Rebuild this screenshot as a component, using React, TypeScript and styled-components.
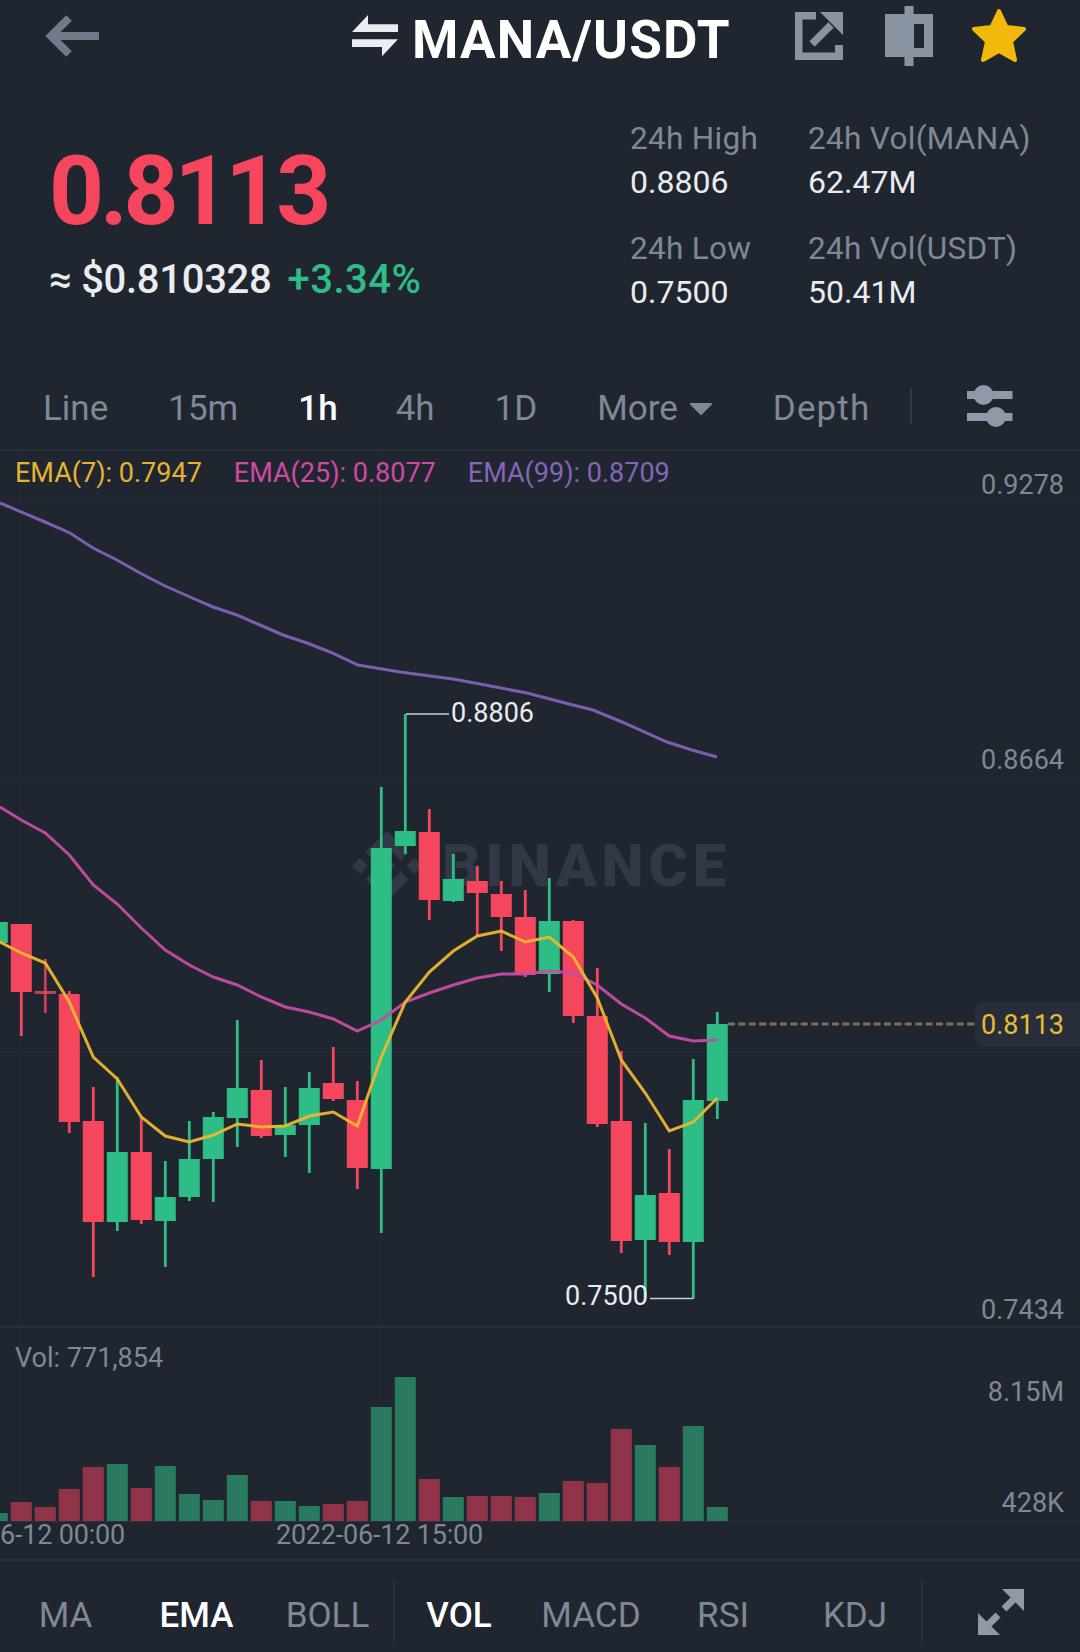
import React from 'react';
import styled, { createGlobalStyle } from 'styled-components';

const GlobalStyle = createGlobalStyle`
  html, body {
    margin: 0;
    padding: 0;
    background: #1f2630;
  }
  * { box-sizing: border-box; }
`;

const GREY = '#7f8896';
const WHITE = '#eaecef';
const GREEN = '#2ebd85';
const RED = '#f6465d';

const Page = styled.div`
  width: 1080px;
  height: 1652px;
  overflow: hidden;
  background: #1f2630;
  color: ${WHITE};
  font-family: Roboto, "Liberation Sans", sans-serif;
`;

const Header = styled.header`
  height: 72px;
  display: flex;
  align-items: center;
  padding: 0 54px 0 45px;
`;

const TitleGroup = styled.div`
  display: flex;
  align-items: center;
  gap: 13px;
  margin-left: 252px;
`;

const Title = styled.h1`
  margin: 8px 0 0;
  font-size: 53px;
  line-height: 60px;
  font-weight: 700;
  color: #fff;
  letter-spacing: 1.1px;
`;

const Actions = styled.div`
  margin-left: auto;
  display: flex;
  align-items: center;
  gap: 39px;
`;

const ShareSlot = styled.span`
  display: flex;
  margin-right: 3px;
`;

const Summary = styled.section`
  height: 298px;
  display: flex;
  justify-content: space-between;
`;

const PriceBlock = styled.div`
  padding: 71px 0 0 49px;
`;

const LastPrice = styled.div`
  font-size: 96px;
  line-height: 96px;
  font-weight: 700;
  color: ${RED};
  letter-spacing: -4.2px;
`;

const PriceSub = styled.div`
  margin-top: 17px;
  display: flex;
  gap: 16px;
  font-size: 40px;
  line-height: 48px;
  font-weight: 500;
  letter-spacing: -0.3px;
`;

const Change = styled.span`
  color: ${GREEN};
  letter-spacing: 0.5px;
`;

const Stats = styled.div`
  width: 450px;
  padding-top: 48px;
  display: grid;
  grid-template-columns: 178px 1fr;
  grid-auto-rows: 110px;
`;

const Stat = styled.div`
  display: flex;
  flex-direction: column;
  gap: 5px;
`;

const StatLabel = styled.span`
  font-size: 31.5px;
  line-height: 38px;
  letter-spacing: 0.3px;
  color: ${GREY};
`;

const StatValue = styled.span`
  font-size: 32px;
  line-height: 38px;
  color: ${WHITE};
`;

const Intervals = styled.nav`
  height: 81px;
  display: flex;
  align-items: center;
  gap: 60px;
  padding: 0 0 7px 43px;
  border-bottom: 2px solid #2a303b;
`;

const Interval = styled.span<{ $active?: boolean; $spaced?: boolean }>`
  display: flex;
  align-items: center;
  gap: 11px;
  padding-top: 6px;
  font-size: 35px;
  line-height: 40px;
  font-weight: ${p => (p.$active ? 500 : 400)};
  letter-spacing: ${p => (p.$spaced ? '1.1px' : '0')};
  color: ${p => (p.$active ? '#fff' : GREY)};
  margin-right: ${p => (p.$active ? '-2px' : '0')};
`;

const RowDivider = styled.span`
  width: 2px;
  height: 36px;
  margin-left: -20px;
  background: #323946;
`;

const SettingsIcon = styled.svg`
  margin-left: -5px;
`;

const ChartPanel = styled.section`
  position: relative;
  height: 877px;
  border-bottom: 2px solid #2a303b;
`;

const ChartSvg = styled.svg`
  position: relative;
  display: block;
  z-index: 1;
`;

const Watermark = styled.div`
  position: absolute;
  left: 352px;
  top: 379px;
  display: flex;
  align-items: center;
  gap: 20px;
  color: #323845;
`;

const WatermarkText = styled.span`
  font-size: 60px;
  line-height: 72px;
  font-weight: 900;
  letter-spacing: 4.8px;
`;

const Legend = styled.div`
  position: absolute;
  z-index: 2;
  left: 15px;
  top: 5px;
  display: flex;
  gap: 32px;
  font-size: 27px;
  line-height: 34px;
`;

const LegendItem = styled.span<{ $color: string }>`
  color: ${p => p.$color};
`;

const AxisLabel = styled.span<{ $y: number }>`
  position: absolute;
  z-index: 2;
  right: 16px;
  top: ${p => p.$y}px;
  font-size: 27px;
  line-height: 34px;
  color: ${GREY};
`;

const LastTag = styled.span`
  position: absolute;
  z-index: 2;
  right: 0;
  top: 551px;
  width: 105px;
  height: 45px;
  padding-left: 6px;
  border-radius: 8px 0 0 8px;
  background: #282e39;
  color: #e6bd32;
  font-size: 27px;
  line-height: 47px;
`;

const ExtremeLabel = styled.span<{ $x: number; $y: number }>`
  position: absolute;
  z-index: 2;
  left: ${p => p.$x}px;
  top: ${p => p.$y}px;
  font-size: 27px;
  line-height: 34px;
  color: ${WHITE};
`;

const VolumePanel = styled.section`
  position: relative;
  height: 233px;
  border-bottom: 2px solid #2a303b;
`;

const VolumeCaption = styled.span`
  position: absolute;
  z-index: 2;
  left: 15px;
  top: 13px;
  font-size: 27px;
  line-height: 34px;
  color: ${GREY};
`;

const VolumeSvg = styled.svg`
  display: block;
`;

const TimeAxis = styled.div`
  display: flex;
  gap: 151px;
  margin-top: -6px;
  font-size: 27px;
  line-height: 34px;
  letter-spacing: -0.2px;
  color: ${GREY};
`;

const Indicators = styled.nav`
  height: 91px;
  display: grid;
  grid-template-columns: repeat(3, 131px) repeat(4, 132px) 1fr;
  align-items: center;
`;

const Indicator = styled.span<{ $active?: boolean; $divider?: boolean; $nudge?: number }>`
  position: relative;
  display: flex;
  justify-content: center;
  align-items: center;
  height: 91px;
  padding-top: ${p => p.$nudge ?? 17}px;
  font-size: 35px;
  font-weight: ${p => (p.$active ? 500 : 400)};
  color: ${p => (p.$active ? '#fff' : GREY)};

  ${p =>
    p.$divider &&
    `&::before {
      content: '';
      position: absolute;
      left: 0;
      top: 19px;
      bottom: 9px;
      width: 2px;
      background: #2a303b;
    }`}
`;

type Candle = { up: boolean; top: number; bot: number; hi: number; lo: number; vol: number };

// x = first centre + index * 24
const candles: Candle[] = [
  { up: true, top: 922, bot: 943, hi: 922, lo: 943, vol: 1513 },
  { up: false, top: 924, bot: 992, hi: 924, lo: 1036, vol: 1502 },
  { up: false, top: 991, bot: 994, hi: 959, lo: 1013, vol: 1507 },
  { up: false, top: 994, bot: 1122, hi: 991, lo: 1133, vol: 1489 },
  { up: false, top: 1121, bot: 1222, hi: 1087, lo: 1277, vol: 1467 },
  { up: true, top: 1152, bot: 1222, hi: 1077, lo: 1231, vol: 1464 },
  { up: false, top: 1152, bot: 1220, hi: 1117, lo: 1224, vol: 1488 },
  { up: true, top: 1197, bot: 1221, hi: 1161, lo: 1267, vol: 1466 },
  { up: true, top: 1159, bot: 1197, hi: 1121, lo: 1201, vol: 1494 },
  { up: true, top: 1117, bot: 1159, hi: 1112, lo: 1202, vol: 1500 },
  { up: true, top: 1088, bot: 1118, hi: 1020, lo: 1147, vol: 1475 },
  { up: false, top: 1090, bot: 1136, hi: 1060, lo: 1138, vol: 1501 },
  { up: true, top: 1125, bot: 1135, hi: 1087, lo: 1157, vol: 1501 },
  { up: true, top: 1088, bot: 1125, hi: 1072, lo: 1173, vol: 1506 },
  { up: false, top: 1083, bot: 1099, hi: 1047, lo: 1101, vol: 1504 },
  { up: false, top: 1100, bot: 1168, hi: 1081, lo: 1189, vol: 1501 },
  { up: true, top: 848, bot: 1169, hi: 787, lo: 1233, vol: 1407 },
  { up: true, top: 831, bot: 846, hi: 714, lo: 854, vol: 1377 },
  { up: false, top: 832, bot: 900, hi: 809, lo: 920, vol: 1479 },
  { up: true, top: 879, bot: 901, hi: 854, lo: 902, vol: 1497 },
  { up: false, top: 881, bot: 893, hi: 866, lo: 936, vol: 1496 },
  { up: false, top: 894, bot: 917, hi: 881, lo: 951, vol: 1496 },
  { up: false, top: 917, bot: 975, hi: 890, lo: 977, vol: 1497 },
  { up: true, top: 921, bot: 974, hi: 878, lo: 992, vol: 1493 },
  { up: false, top: 921, bot: 1016, hi: 920, lo: 1023, vol: 1481 },
  { up: false, top: 1016, bot: 1124, hi: 968, lo: 1127, vol: 1483 },
  { up: false, top: 1121, bot: 1241, hi: 1051, lo: 1253, vol: 1429 },
  { up: true, top: 1195, bot: 1240, hi: 1123, lo: 1298, vol: 1445 },
  { up: false, top: 1193, bot: 1242, hi: 1149, lo: 1255, vol: 1467 },
  { up: true, top: 1100, bot: 1242, hi: 1059, lo: 1299, vol: 1426 },
  { up: true, top: 1024, bot: 1101, hi: 1012, lo: 1119, vol: 1507 },
];

const candleX = (i: number) => -2.7 + i * 24;

const ema7 =
  '0,942 21.3,953 45.3,963 69.3,1002 93.3,1057 117.3,1079 141.3,1117 165.3,1136 189.3,1142 213.3,1135 237.3,1124 261.3,1127 285.3,1126 309.3,1116 333.3,1112 357.3,1126 381.3,1057 405.3,1002 429.3,972 453.3,951 477.3,936 501.3,931 525.3,942 549.3,937 573.3,957 597.3,998 621.3,1060 645.3,1093 669.3,1131 693.3,1122 717.3,1098';
const ema25 =
  '0,807 21.3,820 45.3,833 69.3,855 93.3,885 117.3,904 141.3,928 165.3,950 189.3,965 213.3,977 237.3,985 261.3,997 285.3,1007 309.3,1012 333.3,1019 357.3,1031 381.3,1020 405.3,1002 429.3,993 453.3,985 477.3,978 501.3,974 525.3,974 549.3,971 573.3,973 597.3,985 621.3,1004 645.3,1018 669.3,1036 693.3,1041 717.3,1040';
const ema99 =
  '0,503 45,522 70,533 93,548 117,560 140,573 163,585 190,597 213,607 237,615 260,625 283,635 307,643 330,652 358,665 400,672 453,679 480,684 527,693 569,704 593,710 622,722 667,742 692,750 717,757';

const gridV = [21, 381];
const gridH = [502, 777, 1052];

function BackIcon() {
  return (
    <svg width="55" height="44" viewBox="45 14 55 44" fill="none">
      <path d="M99 36H52M69 18L51 36l18 18" stroke="#707a8a" strokeWidth="8" />
    </svg>
  );
}

function SwapIcon() {
  return (
    <svg width="47" height="42" viewBox="352 14 47 42" fill="#eaecef">
      <path d="M368 14v9.3h30V31h-46z" />
      <path d="M352 38.3h46L382 55.3V46h-30z" />
    </svg>
  );
}

function ShareIcon() {
  return (
    <svg width="48" height="48" viewBox="0 0 48 48" fill="#8a93a2">
      <path d="M0 0h21v7.5H7.5v33H40V33h8v15H0z" />
      <path d="M25 0h23v23z" />
      <path d="M17 32l19-19" stroke="#8a93a2" strokeWidth="7.5" />
    </svg>
  );
}

function CandleIcon() {
  return (
    <svg width="48" height="60" viewBox="0 0 48 60" fill="#8a93a2">
      <path fillRule="evenodd" d="M19.5 0h9v8H48v43H28.5v9h-9v-9H0V8h19.5zM29 18v24h10V18z" />
    </svg>
  );
}

function StarIcon() {
  return (
    <svg width="54" height="56" viewBox="0 0 54 56">
      <path
        d="M27 3l7.5 16L52 21 39 33.5 43 52l-16-9-16 9 4-18.5L2 21l17.5-2z"
        fill="#f0b90b"
        stroke="#f0b90b"
        strokeWidth="4"
        strokeLinejoin="round"
      />
    </svg>
  );
}

function CaretIcon() {
  return (
    <svg width="24" height="12" viewBox="0 0 24 12">
      <path d="M2 1h20L12 11z" fill={GREY} stroke={GREY} strokeWidth="2" strokeLinejoin="round" />
    </svg>
  );
}

function SlidersIcon() {
  return (
    <SettingsIcon width="46" height="42" viewBox="967 384 46 42" fill="#8f99a8">
      <rect x="967" y="390" width="45.5" height="8" />
      <circle cx="983.5" cy="394" r="10" />
      <rect x="967" y="412" width="45.5" height="8" />
      <circle cx="996" cy="416" r="10" />
    </SettingsIcon>
  );
}

function ExpandIcon() {
  return (
    <svg width="46" height="46" viewBox="0 0 46 46" fill="#8f99a8">
      <path d="M24 0h22v22z" />
      <path d="M0 24l22 22H0z" />
      <path d="M36 10L26 20M10 36l10-10" stroke="#8f99a8" strokeWidth="7" />
    </svg>
  );
}

function BinanceMark() {
  return (
    <svg width="70" height="70" viewBox="0 0 126.61 126.61" fill="currentColor">
      <path d="M38.73 53.2l24.59-24.58 24.6 24.6 14.3-14.31L63.32 0 24.42 38.9zM0 63.31l14.3-14.31 14.31 14.31-14.31 14.3zM38.73 73.41l24.59 24.59 24.6-24.6 14.31 14.29-38.9 38.91-38.91-38.88-.02-.02zM98 63.31l14.3-14.31 14.31 14.3-14.31 14.32zM77.83 63.3L63.32 48.78 52.59 59.51l-1.24 1.23-2.54 2.54 14.51 14.5 14.51-14.47z" />
    </svg>
  );
}

function PriceChart() {
  return (
    <ChartSvg width="1080" height="875" viewBox="0 451 1080 875" fill="none">
      {gridH.map(y => (
        <line key={y} x1="0" x2="1080" y1={y} y2={y} stroke="#272d38" strokeWidth="1" />
      ))}
      {gridV.map(x => (
        <line key={x} x1={x} x2={x} y1="451" y2="1326" stroke="#252b36" strokeWidth="1" />
      ))}
      {candles.map((c, i) => {
        const x = candleX(i);
        const color = c.up ? GREEN : RED;
        return (
          <g key={i} fill={color}>
            <rect x={x - 1.4} y={c.hi} width="2.8" height={c.lo - c.hi} fillOpacity={c.bot - c.top < 5 ? 0.8 : 1} />
            <rect x={x - 10.5} y={c.top} width="21" height={c.bot - c.top} fillOpacity={c.bot - c.top < 5 ? 0.8 : 1} />
          </g>
        );
      })}
      <polyline points={ema99} stroke="#7b5fae" strokeWidth="3" />
      <polyline points={ema25} stroke="#c44ca6" strokeWidth="3" strokeOpacity="0.95" />
      <polyline points={ema7} stroke="#ecb62f" strokeWidth="3" strokeOpacity="0.95" />
      <path d="M406 714h43" stroke="#c9ced6" strokeWidth="1.6" />
      <path d="M650 1298.5h43" stroke="#c9ced6" strokeWidth="1.6" />
      <line x1="728" x2="975" y1="1024" y2="1024" stroke="#7a7455" strokeWidth="3" strokeDasharray="7 3.4" />
    </ChartSvg>
  );
}

function VolumeChart() {
  return (
    <VolumeSvg width="1080" height="196" viewBox="0 1328 1080 196" fill="none">
      {gridV.map(x => (
        <line key={x} x1={x} x2={x} y1="1328" y2="1521" stroke="#252b36" strokeWidth="1" />
      ))}
      <line x1="0" x2="1080" y1="1521.5" y2="1521.5" stroke="#2a303b" strokeWidth="1.5" />
      {candles.map((c, i) => (
        <rect
          key={i}
          x={candleX(i) - 10.5}
          y={c.vol}
          width="21"
          height={1521 - c.vol}
          fill={c.up ? '#297a5f' : '#913448'}
        />
      ))}
    </VolumeSvg>
  );
}

export default function App() {
  return (
    <Page>
      <GlobalStyle />
      <Header>
        <BackIcon />
        <TitleGroup>
          <SwapIcon />
          <Title>MANA/USDT</Title>
        </TitleGroup>
        <Actions>
          <ShareSlot>
            <ShareIcon />
          </ShareSlot>
          <CandleIcon />
          <StarIcon />
        </Actions>
      </Header>

      <Summary>
        <PriceBlock>
          <LastPrice>0.8113</LastPrice>
          <PriceSub>
            <span>≈ $0.810328</span>
            <Change>+3.34%</Change>
          </PriceSub>
        </PriceBlock>
        <Stats>
          <Stat>
            <StatLabel>24h High</StatLabel>
            <StatValue>0.8806</StatValue>
          </Stat>
          <Stat>
            <StatLabel>24h Vol(MANA)</StatLabel>
            <StatValue>62.47M</StatValue>
          </Stat>
          <Stat>
            <StatLabel>24h Low</StatLabel>
            <StatValue>0.7500</StatValue>
          </Stat>
          <Stat>
            <StatLabel>24h Vol(USDT)</StatLabel>
            <StatValue>50.41M</StatValue>
          </Stat>
        </Stats>
      </Summary>

      <Intervals>
        <Interval>Line</Interval>
        <Interval>15m</Interval>
        <Interval $active>1h</Interval>
        <Interval>4h</Interval>
        <Interval>1D</Interval>
        <Interval>
          More
          <CaretIcon />
        </Interval>
        <Interval $spaced>Depth</Interval>
        <RowDivider />
        <SlidersIcon />
      </Intervals>

      <ChartPanel>
        <Watermark>
          <BinanceMark />
          <WatermarkText>BINANCE</WatermarkText>
        </Watermark>
        <PriceChart />
        <Legend>
          <LegendItem $color="#e6b32f">EMA(7): 0.7947</LegendItem>
          <LegendItem $color="#cf4aa2">EMA(25): 0.8077</LegendItem>
          <LegendItem $color="#8565b8">EMA(99): 0.8709</LegendItem>
        </Legend>
        <AxisLabel $y={17}>0.9278</AxisLabel>
        <AxisLabel $y={292}>0.8664</AxisLabel>
        <LastTag>0.8113</LastTag>
        <AxisLabel $y={842}>0.7434</AxisLabel>
        <ExtremeLabel $x={451} $y={245}>0.8806</ExtremeLabel>
        <ExtremeLabel $x={565} $y={828}>0.7500</ExtremeLabel>
      </ChartPanel>

      <VolumePanel>
        <VolumeChart />
        <VolumeCaption>Vol: 771,854</VolumeCaption>
        <AxisLabel $y={47}>8.15M</AxisLabel>
        <AxisLabel $y={158}>428K</AxisLabel>
        <TimeAxis>
          <span>6-12 00:00</span>
          <span>2022-06-12 15:00</span>
        </TimeAxis>
      </VolumePanel>

      <Indicators>
        <Indicator>MA</Indicator>
        <Indicator $active>EMA</Indicator>
        <Indicator>BOLL</Indicator>
        <Indicator $active $divider>VOL</Indicator>
        <Indicator>MACD</Indicator>
        <Indicator>RSI</Indicator>
        <Indicator>KDJ</Indicator>
        <Indicator $divider $nudge={10}>
          <ExpandIcon />
        </Indicator>
      </Indicators>
    </Page>
  );
}
